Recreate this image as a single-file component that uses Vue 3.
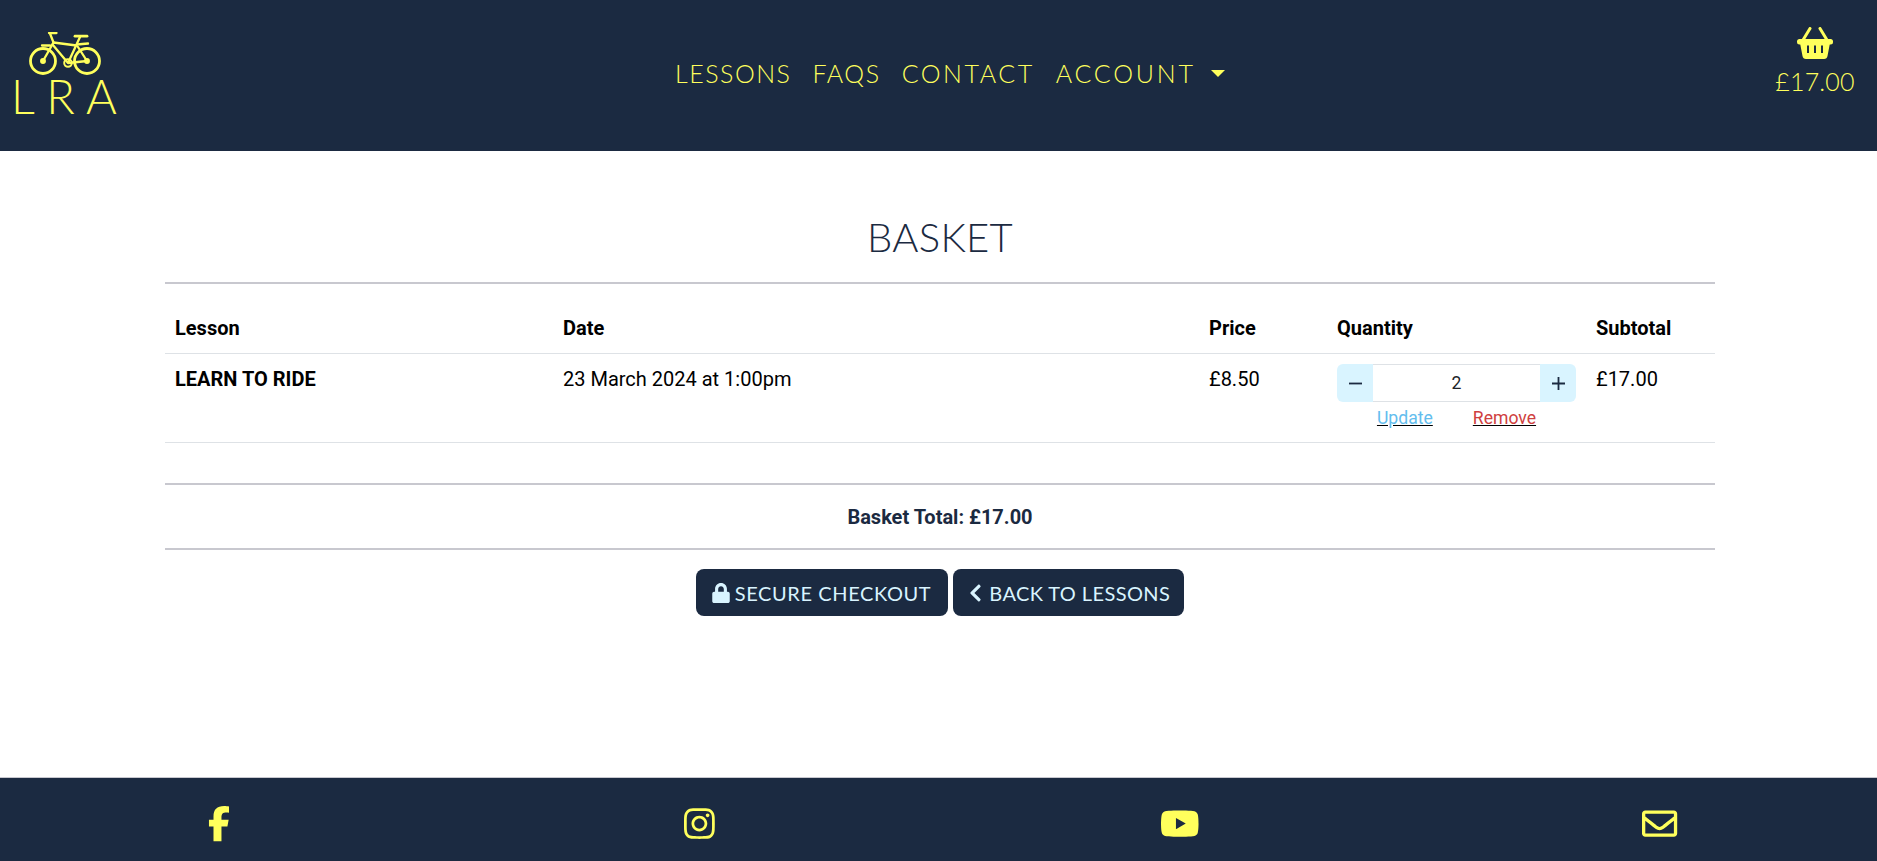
<script setup>
const navItems = [
  { label: 'LESSONS', spacing: '1.5px' },
  { label: 'FAQS', spacing: '1.6px' },
  { label: 'CONTACT', spacing: '2.5px' },
]
</script>

<template>
  <div class="page">
    <header class="top">
      <a class="logo">
        <svg class="bike" viewBox="0 0 72 44" fill="none" stroke="#ffff5c" stroke-width="2.300" stroke-linecap="round" stroke-linejoin="round">
          <circle cx="14" cy="29" r="12.500" stroke-width="2.800" />
          <circle cx="58" cy="29" r="12.500" stroke-width="2.800" />
          <path d="M20 1h7.500M21 1.500l3.500 9-10.500 18.500" />
          <path d="M24.500 10.500l23 3M23.500 12.500l15.500 18.500M51 5l-12 26M39 31l19-2M49 15l9 14" />
          <path d="M46 4.200h12" stroke-width="2.800" />
          <path d="M13 13.500h8M48 12.500l11-1" />
          <circle cx="39" cy="31" r="3.800" stroke-width="2" />
          <circle cx="14" cy="29" r="1.800" fill="#ffff5c" />
          <circle cx="58" cy="29" r="1.800" fill="#ffff5c" />
        </svg>
        <span class="logo-text">L R A</span>
      </a>
      <nav class="nav">
        <a v-for="item in navItems" :key="item.label" class="nav-link" :style="{ letterSpacing: item.spacing }">{{ item.label }}</a>
        <a class="nav-link account">ACCOUNT<span class="caret"></span></a>
      </nav>
      <a class="cart">
        <svg class="cart-icon" viewBox="0 0 36 32">
          <path d="M13 1.500L6 13M23 1.500l7 11.500" stroke="#ffff5c" stroke-width="3" stroke-linecap="round" fill="none" />
          <rect x="0" y="12" width="36" height="5.500" rx="2.500" fill="#ffff5c" />
          <path d="M3 16L5.500 29Q6 32 9 32H27Q30 32 30.500 29L33 16Z" fill="#ffff5c" />
          <path d="M10 18.500h2v7.500h-2zM17 18.500h2v7.500h-2zM24 18.500h2v7.500h-2z" fill="#1b2a41" />
        </svg>
        <span class="cart-total">£17.00</span>
      </a>
    </header>

    <main class="content">
      <h1 class="title">BASKET</h1>
      <hr class="rule" />
      <table class="basket">
        <colgroup>
          <col class="c1" /><col class="c2" /><col class="c3" /><col class="c4" /><col class="c5" />
        </colgroup>
        <thead>
          <tr>
            <th>Lesson</th><th>Date</th><th>Price</th><th>Quantity</th><th>Subtotal</th>
          </tr>
        </thead>
        <tbody>
          <tr>
            <td class="strong">LEARN TO RIDE</td>
            <td>23 March 2024 at 1:00pm</td>
            <td>£8.50</td>
            <td>
              <div class="qty">
                <button class="qty-btn left" aria-label="Decrease">
                  <svg class="qty-icon" viewBox="0 0 13 13"><path d="M0 6.500h13" stroke="#1b2a41" stroke-width="1.800" /></svg>
                </button>
                <span class="qty-value">2</span>
                <button class="qty-btn right" aria-label="Increase">
                  <svg class="qty-icon" viewBox="0 0 13 13"><path d="M0 6.500h13M6.500 0v13" stroke="#1b2a41" stroke-width="1.800" /></svg>
                </button>
              </div>
              <div class="row-links">
                <a class="update">Update</a>
                <a class="remove">Remove</a>
              </div>
            </td>
            <td>£17.00</td>
          </tr>
        </tbody>
      </table>
      <div class="total">Basket Total: £17.00</div>
      <div class="actions">
        <a class="btn checkout">
          <svg class="btn-lock" viewBox="0 0 448 512"><path fill="#d9f4ff" d="M400 224h-24v-72C376 68.200 307.800 0 224 0S72 68.200 72 152v72H48c-26.500 0-48 21.500-48 48v192c0 26.500 21.500 48 48 48h352c26.500 0 48-21.500 48-48V272c0-26.500-21.500-48-48-48zm-104 0H152v-72c0-39.700 32.300-72 72-72s72 32.300 72 72v72z"/></svg>
          SECURE CHECKOUT
        </a>
        <a class="btn back">
          <svg class="btn-chev" viewBox="0 0 320 512"><path fill="#d9f4ff" d="M34.520 239.030L228.870 44.690c9.370-9.370 24.570-9.370 33.940 0l22.670 22.670c9.360 9.360 9.370 24.520.04 33.900L131.490 256l154.020 154.750c9.340 9.380 9.320 24.540-.04 33.900l-22.670 22.670c-9.370 9.370-24.570 9.370-33.940 0L34.520 272.970c-9.370-9.370-9.370-24.570 0-33.940z"/></svg>
          BACK TO LESSONS
        </a>
      </div>
    </main>

    <footer class="foot">
      <a class="foot-link">
        <svg class="icon" viewBox="0 0 320 512"><path fill="#ffff5c" d="M80 299.300V512H196V299.300h86.500l18-97.800H196V166.900c0-51.700 20.300-71.500 72.700-71.500c16.300 0 29.400.4 37 1.200V7.900C291.400 4 256.400 0 236.200 0C129.300 0 80 50.500 80 154.500v47H14V299.300H80z"/></svg>
      </a>
      <a class="foot-link">
        <svg class="icon" viewBox="0 0 448 512"><path fill="#ffff5c" d="M224.100 141c-63.600 0-114.900 51.300-114.900 114.900s51.300 114.900 114.900 114.900S339 319.500 339 255.900 287.700 141 224.100 141zm0 189.600c-41.100 0-74.700-33.500-74.700-74.700s33.500-74.700 74.700-74.700 74.700 33.500 74.700 74.700-33.600 74.700-74.700 74.700zm146.400-194.300c0 14.900-12 26.800-26.800 26.800-14.900 0-26.800-12-26.800-26.800s12-26.800 26.800-26.800 26.800 12 26.800 26.800zm76.100 27.200c-1.700-35.900-9.900-67.700-36.200-93.900-26.200-26.200-58-34.400-93.900-36.200-37-2.100-147.900-2.100-184.900 0-35.800 1.700-67.600 9.900-93.900 36.100s-34.400 58-36.200 93.900c-2.100 37-2.100 147.900 0 184.900 1.700 35.900 9.900 67.700 36.200 93.900s58 34.400 93.900 36.200c37 2.100 147.900 2.100 184.900 0 35.900-1.700 67.700-9.900 93.900-36.200 26.200-26.200 34.400-58 36.200-93.900 2.100-37 2.100-147.800 0-184.800zM398.800 388c-7.800 19.600-22.900 34.700-42.600 42.600-29.500 11.700-99.500 9-132.100 9s-102.700 2.600-132.100-9c-19.600-7.800-34.700-22.900-42.600-42.600-11.700-29.500-9-99.500-9-132.100s-2.600-102.700 9-132.100c7.800-19.600 22.900-34.700 42.600-42.600 29.500-11.700 99.500-9 132.100-9s102.700-2.600 132.100 9c19.600 7.800 34.700 22.900 42.600 42.600 11.700 29.500 9 99.500 9 132.100s2.700 102.700-9 132.100z"/></svg>
      </a>
      <a class="foot-link">
        <svg class="icon" viewBox="0 0 576 512"><path fill="#ffff5c" d="M549.655 124.083c-6.281-23.650-24.787-42.276-48.284-48.597C458.781 64 288 64 288 64S117.220 64 74.629 75.486c-23.497 6.322-42.003 24.947-48.284 48.597-11.412 42.867-11.412 132.305-11.412 132.305s0 89.438 11.412 132.305c6.281 23.650 24.787 41.500 48.284 47.821C117.220 448 288 448 288 448s170.780 0 213.371-11.486c23.497-6.321 42.003-24.171 48.284-47.821 11.412-42.867 11.412-132.305 11.412-132.305s0-89.438-11.412-132.305zm-317.510 213.508V175.185l142.739 81.205-142.739 81.201z"/></svg>
      </a>
      <a class="foot-link">
        <svg class="icon" viewBox="0 0 512 512"><path fill="#ffff5c" d="M464 64H48C21.490 64 0 85.490 0 112v288c0 26.510 21.490 48 48 48h416c26.510 0 48-21.490 48-48V112c0-26.510-21.490-48-48-48zm0 48v40.805c-22.422 18.259-58.168 46.651-134.587 106.490-16.841 13.247-50.201 45.072-73.413 44.701-23.208.375-56.579-31.459-73.413-44.701C106.180 199.465 70.425 171.067 48 152.805V112h416zM48 400V214.398c22.914 18.251 55.409 43.862 104.938 82.646 21.857 17.205 60.134 55.186 103.062 54.955 42.717.231 80.509-37.199 103.053-54.947 49.528-38.783 82.032-64.401 104.947-82.653V400H48z"/></svg>
      </a>
    </footer>
  </div>
</template>

<style scoped>
.page {
  min-height: 861px;
  display: flex;
  flex-direction: column;
  font-family: Roboto, "Liberation Sans", sans-serif;
  color: #000;
}
.top {
  height: 151px;
  flex: none;
  background: #1b2a41;
  color: #ffff5c;
  display: flex;
  align-items: flex-start;
  padding: 0 24px 0 15px;
  box-sizing: border-box;
}
.logo {
  width: 658px;
  flex: none;
  padding-top: 32px;
  display: flex;
  flex-direction: column;
}
.bike {
  width: 72px;
  height: 44px;
  margin-left: 14px;
  display: block;
}
.logo-text {
  font-family: Lato, sans-serif;
  font-weight: 300;
  font-size: 47px;
  line-height: 40px;
  letter-spacing: 0;
  margin-left: -4px;
  white-space: nowrap;
}
.nav {
  display: flex;
  gap: 21px;
  margin-top: 56px;
  margin-left: 2px;
}
.nav-link {
  font-family: Lato, sans-serif;
  font-weight: 300;
  font-size: 25px;
  line-height: 34px;
  letter-spacing: 1.5px;
  display: flex;
  align-items: center;
  white-space: nowrap;
}
.account { letter-spacing: 2.8px; }
.caret {
  width: 0;
  height: 0;
  margin-left: 15px;
  border-left: 7px solid transparent;
  border-right: 7px solid transparent;
  border-top: 7px solid #ffff5c;
}
.cart {
  margin-left: auto;
  margin-top: 27px;
  width: 76px;
  display: flex;
  flex-direction: column;
  align-items: center;
}
.cart-icon {
  width: 36px;
  height: 32px;
  display: block;
}
.cart-total {
  font-family: Lato, sans-serif;
  font-weight: 300;
  font-size: 25px;
  line-height: 34px;
  margin-top: 5px;
  letter-spacing: .2px;
  white-space: nowrap;
}
.content {
  flex: 1;
  padding: 0 162px 0 165px;
}
.title {
  margin: 0;
  padding-top: 61px;
  height: 131px;
  box-sizing: border-box;
  font-family: Lato, sans-serif;
  font-weight: 300;
  font-size: 40px;
  line-height: 50px;
  letter-spacing: .3px;
  text-align: center;
  color: #1b2a41;
}
.rule {
  margin: 0;
  border: 0;
  border-top: 2px solid #c8c8cf;
}
.basket {
  width: 100%;
  margin-top: 19px;
  table-layout: fixed;
  border-collapse: collapse;
  font-size: 20px;
  line-height: 30px;
}
.c1 { width: 388px; }
.c2 { width: 646px; }
.c3 { width: 128px; }
.c4 { width: 259px; }
.basket th,
.basket td {
  padding: 10px;
  text-align: left;
  vertical-align: top;
  font-weight: 400;
  border-bottom: 1px solid #dee2e6;
}
.basket th,
.basket .strong {
  font-weight: 700;
}
.qty {
  display: flex;
  height: 38px;
}
.qty-btn {
  width: 36px;
  border: 0;
  padding: 0;
  background: #d9f4ff;
  display: flex;
  align-items: center;
  justify-content: center;
}
.qty-icon { width: 13px; height: 13px; display: block; }
.qty-btn.left { border-radius: 6px 0 0 6px; }
.qty-btn.right { border-radius: 0 6px 6px 0; }
.qty-value {
  flex: 1;
  border-top: 1px solid #dee2e6;
  border-bottom: 1px solid #dee2e6;
  text-align: center;
  font-size: 17.600px;
  line-height: 36px;
  color: #212529;
}
.row-links {
  display: flex;
  justify-content: center;
  gap: 40px;
  margin-top: 4px;
  padding-bottom: 2px;
  font-size: 17.600px;
  line-height: 24px;
  text-decoration: underline;
}
.update { color: #63bdee; }
.remove { color: #cf4040; }
.total {
  margin-top: 40px;
  height: 63px;
  border-top: 2px solid #c8c8cf;
  border-bottom: 2px solid #c8c8cf;
  display: flex;
  align-items: center;
  justify-content: center;
  font-size: 20px;
  font-weight: 700;
  color: #1b2a41;
}
.actions {
  display: flex;
  justify-content: center;
  gap: 5px;
  margin-top: 19px;
}
.btn {
  height: 47px;
  padding: 0 16px;
  display: flex;
  align-items: center;
  gap: 5px;
  background: #1b2a41;
  color: #d9f4ff;
  border-radius: 8px;
  font-family: Lato, sans-serif;
  font-size: 20px;
  letter-spacing: .5px;
  white-space: nowrap;
}
.checkout {
  letter-spacing: .6px;
  padding-right: 17px;
}
.back {
  letter-spacing: .4px;
  gap: 7px;
  padding-right: 14px;
}
.btn-lock { width: 18px; height: 20px; }
.btn-chev { width: 13px; height: 20px; }
.foot {
  height: 84px;
  flex: none;
  background: #1b2a41;
  border-top: 1px solid #c8c8cf;
  display: flex;
  justify-content: space-between;
  align-items: center;
  padding: 9px 197px 0 199px;
  box-sizing: border-box;
}
.foot-link {
  width: 40px;
  display: flex;
  justify-content: center;
}
.icon { height: 35.200px; display: block; }
</style>

<style>
html, body { background: #fff; }
</style>
